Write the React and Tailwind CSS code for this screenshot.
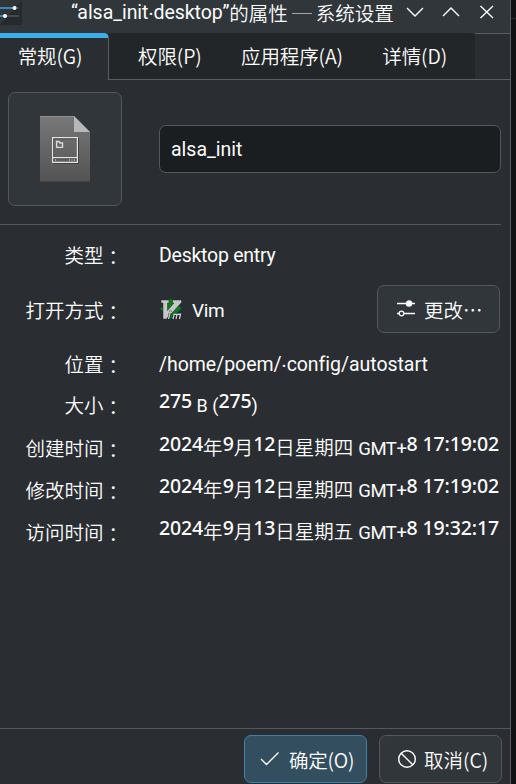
import React from "react";

const SANS = "font-[Roboto,'Liberation_Sans','Noto_Sans_CJK_SC',sans-serif]";
const CJK = "font-['Noto_Sans_CJK_SC',sans-serif] font-[350]";

function Dot() {
  return <span className="inline-block -translate-y-[4px]">.</span>;
}

function SlidersIcon() {
  return (
    <svg width="20" height="20" viewBox="0 0 20 20" fill="none" stroke="#fcfcfc" strokeWidth="1.3">
      <path d="M1 4.500H19M1 14.500H3M8 14.500H19" />
      <circle cx="13" cy="4.500" r="2.600" fill="#fcfcfc" />
      <circle cx="5.500" cy="14.500" r="2.300" />
    </svg>
  );
}

function VimIcon() {
  return (
    <svg width="24" height="24" viewBox="0 0 24 24">
      <path d="M12 1L23 12 12 23.5 1 12Z" fill="#062c70" />
      <path d="M12 0.500L22.500 10.500 12 21 1 11Z" fill="#087f12" />
      <path d="M2 2H10V5H8.500V12.500L15 5H13.500V2H22.500V4.500L7.500 21H4V5H2Z" fill="#c8c8c8" stroke="#252525" strokeWidth=".5" />
      <path d="M11 15L9.500 21M14 21L15.200 16 18 16.500 17 21M18 16.500 21.500 16 20.500 21M11.500 12.500V13.500" fill="none" stroke="#202020" strokeWidth="2.400" />
      <path d="M11 15L9.500 21M14 21L15.200 16 18 16.500 17 21M18 16.500 21.500 16 20.500 21M11.500 12.500V13.500" fill="none" stroke="#cfcfcf" strokeWidth="1.300" />
    </svg>
  );
}

function FileIcon() {
  return (
    <svg width="50" height="66" viewBox="0 0 50 66">
      <defs>
        <linearGradient id="paper" x1="0" y1="0" x2="0" y2="1">
          <stop stopColor="#787878" />
          <stop offset="1" stopColor="#535353" />
        </linearGradient>
      </defs>
      <path d="M0 0H34L50 16V66H0Z" fill="url(#paper)" />
      <path d="M0 .5H34" stroke="#929292" />
      <path d="M0 65.5H50" stroke="#444" />
      <path d="M34 0L50 16H34Z" fill="#b8b8b8" />
      <g fill="none" strokeWidth="1.2">
        <path d="M13.6 22.6H38.4V47.4H13.6ZM13.6 42.6H38.4" stroke="#414141" />
        <path d="M12.6 21.6H37.4V46.4H12.6ZM12.6 41.6H37.4" stroke="#e4e4e4" />
        <path d="M16.6 25.5H19L20 27H22.5V31.4H16.6Z" stroke="#dadada" strokeWidth="1.4" />
        <path d="M15 44H16M29 44H30M31.5 44H32.5M34 44H35" stroke="#e4e4e4" />
      </g>
    </svg>
  );
}

function Tab({ label, className }) {
  return (
    <div className={`flex items-center justify-center whitespace-nowrap ${className}`}>
      <span className={`${CJK} text-[19.5px] tracking-[-0.1px]`}>{label}</span>
    </div>
  );
}

function Row({ label, className, children }) {
  return (
    <div className={`flex items-center whitespace-nowrap ${className}`}>
      <div className={`${CJK} flex w-[123px] shrink-0 justify-end text-[19.5px]`}>
        <span>{label}</span>
        <span className="-mr-px w-[20.5px] pt-[2px] font-['Noto_Sans_CJK_JP',sans-serif] -mb-[2px]" lang="ja">：</span>
      </div>
      <div className="ml-9 flex min-w-0 flex-1 items-center">{children}</div>
    </div>
  );
}

function Num({ children }) {
  return <span className="relative -top-[4px] font-['Noto_Sans',sans-serif] text-[19.5px] font-medium tracking-[-0.13px]">{children}</span>;
}

function Stamp({ day, week, time }) {
  return (
    <span className={`${CJK} text-[19.5px] leading-[42px]`}>
      <Num>2024</Num>年<Num>9</Num>月<Num>{day}</Num>日星期{week}
      <span className="ml-[5px] font-[Roboto,sans-serif] text-[18.5px] font-normal tracking-[-0.45px]">GMT+</span>
      <Num>{"8 " + time}</Num>
    </span>
  );
}

export default function App() {
  return (
    <div className={`${SANS} flex h-[784px] w-[516px] overflow-hidden bg-[#101113] text-[19.5px] text-[#fcfcfc]`}>
      <div className="flex w-[511px] shrink-0 flex-col border-r border-[#5a5e61] bg-[#2a2e32]">
        <header className="flex h-[33px] shrink-0 items-start bg-[#31363b]">
          <svg width="22" height="25" viewBox="0 0 22 25" className="shrink-0">
            <rect width="22" height="25" fill="#252a2d" />
            <path d="M0 0H22L0 25Z" fill="#303538" />
            <path d="M0 8H15" stroke="#3daee9" strokeWidth="1.4" />
            <path d="M15 8H19M5 16H19" stroke="#66696b" strokeWidth="1.2" />
            <path d="M0 16H5" stroke="#3daee9" strokeWidth="1.4" />
            <circle cx="14.5" cy="8" r="2" fill="#fff" />
            <circle cx="5" cy="16" r="2" fill="#fff" />
          </svg>
          <div className="ml-[49px] flex h-[26px] w-[335px] shrink-0 items-center leading-[26px] whitespace-nowrap">
            <span className="tracking-[-0.05px]">“alsa_init<Dot />desktop”</span>
            <span className={`${CJK} text-[19.5px]`}>的属性</span>
            <span className="mx-[4px] h-px w-[20px] bg-[#a2a5a7]" />
            <span className={`${CJK} text-[19.5px]`}>系统设置</span>
          </div>
          <svg width="100" height="24" viewBox="0 0 100 24" fill="none" stroke="#fcfcfc" strokeWidth="1.4" className="shrink-0">
            <path d="M1 8L9 16 17 8M37 16L45 8 53 16M74.500 6L87 18M87 6L74.500 18" />
          </svg>
        </header>

        <nav className="flex h-[47px] shrink-0">
          <Tab label="常规(G)" className="h-[47px] w-[109px] rounded-tr-[5px] border-t-[5px] border-r border-t-[#3daee9] border-r-[#5a5e61] pr-2 pb-[7px]" />
          <div className="flex w-[366px] rounded-tr-[5px] border-b border-[#5a5e61] bg-[#232629] pl-px">
            <Tab label="权限(P)" className="h-[46px] w-[120px]" />
            <Tab label="应用程序(A)" className="h-[46px] w-[125px]" />
            <Tab label="详情(D)" className="h-[46px] w-[121px]" />
          </div>
          <div className="flex-1 border-y border-[#5a5e61]" />
        </nav>

        <section className="mr-[9px] flex h-[145px] shrink-0 items-start border-b border-[#51595a] pt-3 pl-[7.5px]">
          <div className="flex h-[114px] w-[114px] items-center justify-center rounded-[7px] border-[1.5px] border-[#54585c] bg-[#31363b]">
            <FileIcon />
          </div>
          <div className="mt-[33px] ml-[37.5px] flex h-[48px] flex-1 items-center rounded-[7px] border border-[#545859] bg-[#1b1e20] pt-[2px] pl-[11px]">
            alsa_init
          </div>
        </section>

        <main className="flex flex-1 flex-col pt-[9px]">
          <Row label="类型" className="h-[42px]">
            <span className="mt-[2px] tracking-[-0.25px]">Desktop entry</span>
          </Row>
          <Row label="打开方式" className="h-[67px]">
            <VimIcon />
            <span className="mt-[3px] ml-[9px] text-[19px] tracking-[-0.4px]">Vim</span>
            <button className={`${CJK} mr-[10.5px] -mt-px ml-auto flex h-[48px] w-[123px] items-center rounded-[7px] border border-[#54585c] bg-[#31363b] pl-[18px] text-[19.5px]`}>
              <SlidersIcon />
              <span className="mt-[2px] ml-[8.5px]">更改…</span>
            </button>
          </Row>
          <Row label="位置" className="h-[41px]">
            <span className="mt-[2px] tracking-[-0.04px]">/home/poem/<Dot />config/autostart</span>
          </Row>
          <Row label="大小" className="h-[42px]">
            <span className="text-[18px]">
              <Num>275</Num> B (<Num>275</Num>)
            </span>
          </Row>
          <Row label="创建时间" className="h-[43px]"><Stamp day="12" week="四" time="17:19:02" /></Row>
          <Row label="修改时间" className="h-[42px]"><Stamp day="12" week="四" time="17:19:02" /></Row>
          <Row label="访问时间" className="h-[42px]"><Stamp day="13" week="五" time="19:32:17" /></Row>
        </main>

        <footer className={`${CJK} flex h-[56px] shrink-0 justify-end gap-3 border-t border-[#54585c] pt-[6px] pr-2 text-[19.5px]`}>
          <button className="flex h-[48px] w-[123px] items-center rounded-[7px] border-[1.5px] border-[#3d83aa] bg-[#334e5e] pl-[15px] whitespace-nowrap">
            <svg width="20" height="20" viewBox="0 0 20 20" fill="none" stroke="#fcfcfc" strokeWidth="1.4"><path d="M1 10L6.500 15.500 18.500 3.500" /></svg>
            <span className="mt-px ml-[9px] tracking-[-0.2px]">确定(O)</span>
          </button>
          <button className="flex h-[48px] w-[123px] items-center rounded-[7px] border border-[#54585c] bg-[#31363b] pl-[17px] whitespace-nowrap">
            <svg width="20" height="20" viewBox="0 0 20 20" fill="none" stroke="#fcfcfc" strokeWidth="1.4"><circle cx="10" cy="10" r="8.300" /><path d="M4.200 4.200L15.800 15.800" /></svg>
            <span className="mt-px ml-[7px]">取消(C)</span>
          </button>
        </footer>
      </div>
      <div className="flex flex-1 flex-col"><div className="h-[19px] border-b border-[#292c2e]" /></div>
    </div>
  );
}
